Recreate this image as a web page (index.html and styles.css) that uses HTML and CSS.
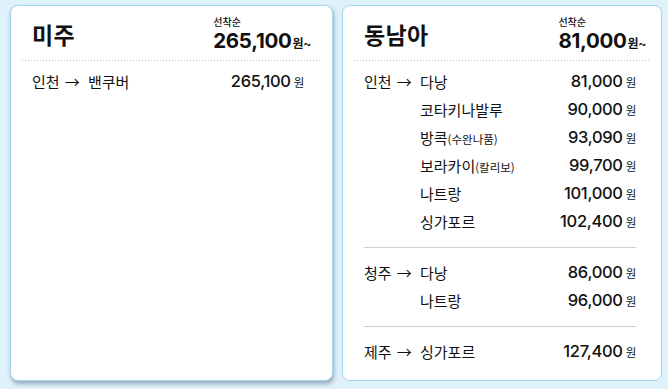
FILE: index.html
```html
<!DOCTYPE html>
<html lang="ko">
<head>
<meta charset="utf-8">
<link rel="stylesheet" href="styles.css">
</head>
<body>
<div class="wrap">
  <section class="card card--raised">
    <header class="head">
      <h2 class="title">미주</h2>
      <div class="from">
        <div class="from-label">선착순</div>
        <div class="from-price">265,100<span class="from-unit">원~</span></div>
      </div>
    </header>
    <div class="dots"></div>
    <div class="list list--narrow">
      <div class="group">
        <div class="row"><span class="orig">인천 <span class="arr">→</span></span><span class="dest">밴쿠버</span><span class="price">265,100<span class="unit">원</span></span></div>
      </div>
    </div>
  </section>
  <section class="card">
    <header class="head">
      <h2 class="title">동남아</h2>
      <div class="from">
        <div class="from-label">선착순</div>
        <div class="from-price">81,000<span class="from-unit">원~</span></div>
      </div>
    </header>
    <div class="dots"></div>
    <div class="list">
      <div class="group">
        <div class="row"><span class="orig">인천 <span class="arr">→</span></span><span class="dest">다낭</span><span class="price">81,000<span class="unit">원</span></span></div>
        <div class="row"><span class="orig"></span><span class="dest">코타키나발루</span><span class="price">90,000<span class="unit">원</span></span></div>
        <div class="row"><span class="orig"></span><span class="dest">방콕<small class="note">(수완나품)</small></span><span class="price">93,090<span class="unit">원</span></span></div>
        <div class="row"><span class="orig"></span><span class="dest">보라카이<small class="note">(칼리보)</small></span><span class="price">99,700<span class="unit">원</span></span></div>
        <div class="row"><span class="orig"></span><span class="dest">나트랑</span><span class="price">101,000<span class="unit">원</span></span></div>
        <div class="row"><span class="orig"></span><span class="dest">싱가포르</span><span class="price">102,400<span class="unit">원</span></span></div>
      </div>
      <div class="group">
        <div class="row"><span class="orig">청주 <span class="arr">→</span></span><span class="dest">다낭</span><span class="price">86,000<span class="unit">원</span></span></div>
        <div class="row"><span class="orig"></span><span class="dest">나트랑</span><span class="price">96,000<span class="unit">원</span></span></div>
      </div>
      <div class="group">
        <div class="row"><span class="orig">제주 <span class="arr">→</span></span><span class="dest">싱가포르</span><span class="price">127,400<span class="unit">원</span></span></div>
      </div>
    </div>
  </section>
</div>
</body>
</html>
```

FILE: styles.css
```css
* { box-sizing: border-box; }
html, body { margin: 0; padding: 0; }
body {
  background: #dff1fa;
  font-family: Inter, "Noto Sans CJK KR", sans-serif;
  color: #111;
  width: 668px;
  height: 389px;
  overflow: hidden;
}
.wrap {
  display: flex;
  gap: 9px;
  padding: 5px 0 0 10px;
}
.card {
  background: #fff;
  border: 1px solid #a6d3ee;
  border-radius: 8px;
  height: 376px;
  width: 320px;
}
.card--raised {
  width: 323px;
  box-shadow: 1px 3px 4px rgba(40, 70, 100, 0.4);
}
.head {
  height: 54px;
  display: flex;
  justify-content: space-between;
  align-items: center;
  padding: 2px 15px 0 21px;
}
.card--raised .head { padding-right: 21px; }
.title {
  margin: 0;
  font-size: 23px;
  font-weight: 700;
  letter-spacing: 0.3px;
}
.from { line-height: 1; }
.from-label {
  font-size: 10px;
  font-weight: 500;
  margin-bottom: 4px;
}
.from-price {
  font-size: 20.5px;
  font-weight: 700;
  letter-spacing: -0.3px;
}
.from-unit {
  font-size: 12px;
  font-weight: 600;
  margin-left: 1px;
}
.dots {
  height: 1px;
  margin: 0 11px;
  background-image: linear-gradient(to right, #c4c4c4 1.5px, transparent 1.5px);
  background-size: 3px 1px;
}
.list {
  padding: 6px 25px 0 21px;
}
.list--narrow { padding-right: 28px; }
.group { padding: 0 0 12px; }
.group + .group {
  border-top: 1px solid #cfcfcf;
  padding-top: 10px;
}
.row {
  display: grid;
  grid-template-columns: 56px 1fr auto;
  align-items: center;
  height: 28px;
  font-size: 15px;
  font-family: "Noto Sans CJK KR", sans-serif;
}
.arr {
  margin-left: 1px;
  font-family: "Noto Sans CJK KR", sans-serif;
}
.note { font-size: 11.5px; }
.price {
  font-family: Inter, "Noto Sans CJK KR", sans-serif;
  font-size: 16.5px;
  font-weight: 500;
  letter-spacing: -0.3px;
}
.unit {
  font-family: "Noto Sans CJK KR", sans-serif;
  font-size: 11.5px;
  font-weight: 400;
  margin-left: 3px;
}
```
